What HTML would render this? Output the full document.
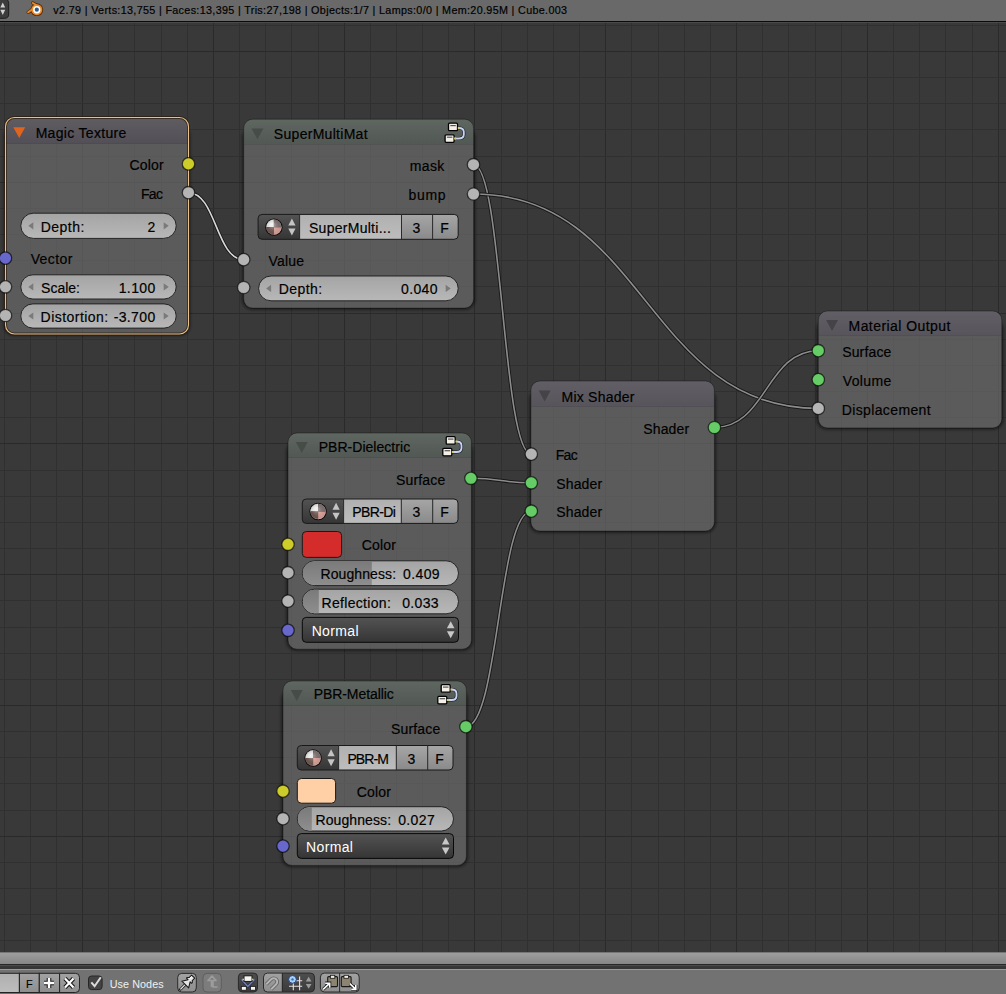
<!DOCTYPE html>
<html><head><meta charset="utf-8"><title>Node Editor</title><style>html,body{margin:0;padding:0;background:#393939;overflow:hidden}svg{display:block;position:absolute;left:0;top:0}text{font-family:"Liberation Sans",sans-serif;white-space:pre}</style></head><body><svg width="1006" height="994" viewBox="0 0 1006 994"><defs><filter id="shadow" x="-20%" y="-20%" width="140%" height="140%"><feGaussianBlur stdDeviation="2.5"/></filter><radialGradient id="gsph" cx="0.5" cy="0.5" r="0.5" fx="0.35" fy="0.3"><stop offset="0" stop-color="#fff" stop-opacity="0.55"/><stop offset="0.45" stop-color="#fff" stop-opacity="0.1"/><stop offset="0.85" stop-color="#000" stop-opacity="0.05"/><stop offset="1" stop-color="#fff" stop-opacity="0.35"/></radialGradient><linearGradient id="gnum" x1="0" y1="0" x2="0" y2="1"><stop offset="0" stop-color="#a4a4a4"/><stop offset="1" stop-color="#b8b8b8"/></linearGradient><linearGradient id="gfill" x1="0" y1="0" x2="0" y2="1"><stop offset="0" stop-color="#7a7a7a"/><stop offset="1" stop-color="#8e8e8e"/></linearGradient><linearGradient id="gmenu" x1="0" y1="0" x2="0" y2="1"><stop offset="0" stop-color="#535353"/><stop offset="1" stop-color="#353535"/></linearGradient><linearGradient id="gbtn" x1="0" y1="0" x2="0" y2="1"><stop offset="0" stop-color="#a6a6a6"/><stop offset="1" stop-color="#8a8a8a"/></linearGradient><linearGradient id="gtxt" x1="0" y1="0" x2="0" y2="1"><stop offset="0" stop-color="#b0b0b0"/><stop offset="1" stop-color="#bdbdbd"/></linearGradient><mask id="nm7" maskUnits="userSpaceOnUse" x="0" y="0" width="1006" height="994"><rect x="0" y="0" width="1006" height="994" fill="#fff"/><rect x="5.5" y="117.5" width="183.0" height="216.5" rx="9" fill="#000"/></mask><linearGradient id="hg8" x1="0" y1="0" x2="0" y2="1"><stop offset="0" stop-color="#5f5c62"/><stop offset="1" stop-color="#524f56"/></linearGradient><mask id="nm9" maskUnits="userSpaceOnUse" x="0" y="0" width="1006" height="994"><rect x="0" y="0" width="1006" height="994" fill="#fff"/><rect x="243.7" y="119.2" width="229.90000000000003" height="188.90000000000003" rx="9" fill="#000"/></mask><linearGradient id="hg10" x1="0" y1="0" x2="0" y2="1"><stop offset="0" stop-color="#5f6761"/><stop offset="1" stop-color="#525854"/></linearGradient><mask id="nm11" maskUnits="userSpaceOnUse" x="0" y="0" width="1006" height="994"><rect x="0" y="0" width="1006" height="994" fill="#fff"/><rect x="288.0" y="433.0" width="183.39999999999998" height="216.20000000000005" rx="9" fill="#000"/></mask><linearGradient id="hg12" x1="0" y1="0" x2="0" y2="1"><stop offset="0" stop-color="#5f6761"/><stop offset="1" stop-color="#525854"/></linearGradient><clipPath id="clip13"><rect x="302.3" y="560.8" width="69.5" height="24.800000000000068"/></clipPath><clipPath id="clip14"><rect x="302.3" y="589.2" width="16.5" height="24.59999999999991"/></clipPath><mask id="nm15" maskUnits="userSpaceOnUse" x="0" y="0" width="1006" height="994"><rect x="0" y="0" width="1006" height="994" fill="#fff"/><rect x="283.0" y="681.0" width="183.39999999999998" height="184.39999999999998" rx="9" fill="#000"/></mask><linearGradient id="hg16" x1="0" y1="0" x2="0" y2="1"><stop offset="0" stop-color="#5f6761"/><stop offset="1" stop-color="#525854"/></linearGradient><clipPath id="clip17"><rect x="297.3" y="806.7" width="14.5" height="24.299999999999955"/></clipPath><mask id="nm18" maskUnits="userSpaceOnUse" x="0" y="0" width="1006" height="994"><rect x="0" y="0" width="1006" height="994" fill="#fff"/><rect x="530.9" y="381.0" width="183.5" height="150.10000000000002" rx="9" fill="#000"/></mask><linearGradient id="hg19" x1="0" y1="0" x2="0" y2="1"><stop offset="0" stop-color="#615f65"/><stop offset="1" stop-color="#57555b"/></linearGradient><mask id="nm20" maskUnits="userSpaceOnUse" x="0" y="0" width="1006" height="994"><rect x="0" y="0" width="1006" height="994" fill="#fff"/><rect x="818.3" y="311.0" width="183.5" height="116.89999999999998" rx="9" fill="#000"/></mask><linearGradient id="hg21" x1="0" y1="0" x2="0" y2="1"><stop offset="0" stop-color="#615f65"/><stop offset="1" stop-color="#57555b"/></linearGradient><linearGradient id="gband" x1="0" y1="0" x2="0" y2="1"><stop offset="0" stop-color="#9e9e9e"/><stop offset="1" stop-color="#868686"/></linearGradient><linearGradient id="gfbtn" x1="0" y1="0" x2="0" y2="1"><stop offset="0" stop-color="#a2a2a2"/><stop offset="1" stop-color="#8e8e8e"/></linearGradient><linearGradient id="gfdark" x1="0" y1="0" x2="0" y2="1"><stop offset="0" stop-color="#4e4e4e"/><stop offset="1" stop-color="#3a3a3a"/></linearGradient></defs><rect x="0" y="0" width="1006" height="994" fill="#393939"/>
<g shape-rendering="crispEdges"><rect x="4" y="22" width="1" height="930" fill="#303030"/><rect x="30" y="22" width="1" height="930" fill="#303030"/><rect x="56" y="22" width="1" height="930" fill="#303030"/><rect x="82" y="22" width="1" height="930" fill="#2a2a2a"/><rect x="108" y="22" width="1" height="930" fill="#303030"/><rect x="134" y="22" width="1" height="930" fill="#303030"/><rect x="161" y="22" width="1" height="930" fill="#303030"/><rect x="187" y="22" width="1" height="930" fill="#303030"/><rect x="213" y="22" width="1" height="930" fill="#2a2a2a"/><rect x="239" y="22" width="1" height="930" fill="#303030"/><rect x="265" y="22" width="1" height="930" fill="#303030"/><rect x="291" y="22" width="1" height="930" fill="#303030"/><rect x="318" y="22" width="1" height="930" fill="#303030"/><rect x="344" y="22" width="1" height="930" fill="#2a2a2a"/><rect x="370" y="22" width="1" height="930" fill="#303030"/><rect x="396" y="22" width="1" height="930" fill="#303030"/><rect x="422" y="22" width="1" height="930" fill="#303030"/><rect x="448" y="22" width="1" height="930" fill="#303030"/><rect x="474" y="22" width="1" height="930" fill="#2a2a2a"/><rect x="501" y="22" width="1" height="930" fill="#303030"/><rect x="527" y="22" width="1" height="930" fill="#303030"/><rect x="553" y="22" width="1" height="930" fill="#303030"/><rect x="579" y="22" width="1" height="930" fill="#303030"/><rect x="605" y="22" width="1" height="930" fill="#2a2a2a"/><rect x="631" y="22" width="1" height="930" fill="#303030"/><rect x="658" y="22" width="1" height="930" fill="#303030"/><rect x="684" y="22" width="1" height="930" fill="#303030"/><rect x="710" y="22" width="1" height="930" fill="#303030"/><rect x="736" y="22" width="1" height="930" fill="#2a2a2a"/><rect x="762" y="22" width="1" height="930" fill="#303030"/><rect x="788" y="22" width="1" height="930" fill="#303030"/><rect x="815" y="22" width="1" height="930" fill="#303030"/><rect x="841" y="22" width="1" height="930" fill="#303030"/><rect x="867" y="22" width="1" height="930" fill="#2a2a2a"/><rect x="893" y="22" width="1" height="930" fill="#303030"/><rect x="919" y="22" width="1" height="930" fill="#303030"/><rect x="945" y="22" width="1" height="930" fill="#303030"/><rect x="972" y="22" width="1" height="930" fill="#303030"/><rect x="998" y="22" width="1" height="930" fill="#2a2a2a"/><rect x="0" y="25" width="1006" height="1" fill="#303030"/><rect x="0" y="51" width="1006" height="1" fill="#2a2a2a"/><rect x="0" y="77" width="1006" height="1" fill="#303030"/><rect x="0" y="103" width="1006" height="1" fill="#303030"/><rect x="0" y="129" width="1006" height="1" fill="#303030"/><rect x="0" y="156" width="1006" height="1" fill="#303030"/><rect x="0" y="182" width="1006" height="1" fill="#2a2a2a"/><rect x="0" y="208" width="1006" height="1" fill="#303030"/><rect x="0" y="234" width="1006" height="1" fill="#303030"/><rect x="0" y="260" width="1006" height="1" fill="#303030"/><rect x="0" y="286" width="1006" height="1" fill="#303030"/><rect x="0" y="313" width="1006" height="1" fill="#2a2a2a"/><rect x="0" y="339" width="1006" height="1" fill="#303030"/><rect x="0" y="365" width="1006" height="1" fill="#303030"/><rect x="0" y="391" width="1006" height="1" fill="#303030"/><rect x="0" y="417" width="1006" height="1" fill="#303030"/><rect x="0" y="443" width="1006" height="1" fill="#2a2a2a"/><rect x="0" y="470" width="1006" height="1" fill="#303030"/><rect x="0" y="496" width="1006" height="1" fill="#303030"/><rect x="0" y="522" width="1006" height="1" fill="#303030"/><rect x="0" y="548" width="1006" height="1" fill="#303030"/><rect x="0" y="574" width="1006" height="1" fill="#2a2a2a"/><rect x="0" y="600" width="1006" height="1" fill="#303030"/><rect x="0" y="627" width="1006" height="1" fill="#303030"/><rect x="0" y="653" width="1006" height="1" fill="#303030"/><rect x="0" y="679" width="1006" height="1" fill="#303030"/><rect x="0" y="705" width="1006" height="1" fill="#2a2a2a"/><rect x="0" y="731" width="1006" height="1" fill="#303030"/><rect x="0" y="757" width="1006" height="1" fill="#303030"/><rect x="0" y="783" width="1006" height="1" fill="#303030"/><rect x="0" y="810" width="1006" height="1" fill="#303030"/><rect x="0" y="836" width="1006" height="1" fill="#2a2a2a"/><rect x="0" y="862" width="1006" height="1" fill="#303030"/><rect x="0" y="888" width="1006" height="1" fill="#303030"/><rect x="0" y="914" width="1006" height="1" fill="#303030"/><rect x="0" y="940" width="1006" height="1" fill="#303030"/></g>
<path d="M188.5,192.7 C216.1,192.7 216.1,259.6 243.7,259.6" fill="none" stroke="#141414" stroke-opacity="0.9" stroke-width="3.4"/>
<path d="M188.5,192.7 C216.1,192.7 216.1,259.6 243.7,259.6" fill="none" stroke="#d8d8d8" stroke-width="1.6"/>
<path d="M473.5,164.7 C502.4,164.7 502.4,454.1 531.3,454.1" fill="none" stroke="#141414" stroke-opacity="0.9" stroke-width="3.4"/>
<path d="M473.5,164.7 C502.4,164.7 502.4,454.1 531.3,454.1" fill="none" stroke="#8c8c8c" stroke-width="1.6"/>
<path d="M473.5,194.0 C645.9,194.0 645.9,408.4 818.3,408.4" fill="none" stroke="#141414" stroke-opacity="0.9" stroke-width="3.4"/>
<path d="M473.5,194.0 C645.9,194.0 645.9,408.4 818.3,408.4" fill="none" stroke="#8c8c8c" stroke-width="1.6"/>
<path d="M470.9,478.3 C501.09999999999997,478.3 501.09999999999997,482.8 531.3,482.8" fill="none" stroke="#141414" stroke-opacity="0.9" stroke-width="3.4"/>
<path d="M470.9,478.3 C501.09999999999997,478.3 501.09999999999997,482.8 531.3,482.8" fill="none" stroke="#8c8c8c" stroke-width="1.6"/>
<path d="M465.9,726.7 C498.59999999999997,726.7 498.59999999999997,511.2 531.3,511.2" fill="none" stroke="#141414" stroke-opacity="0.9" stroke-width="3.4"/>
<path d="M465.9,726.7 C498.59999999999997,726.7 498.59999999999997,511.2 531.3,511.2" fill="none" stroke="#8c8c8c" stroke-width="1.6"/>
<path d="M714.4,427.5 C766.3499999999999,427.5 766.3499999999999,350.7 818.3,350.7" fill="none" stroke="#141414" stroke-opacity="0.9" stroke-width="3.4"/>
<path d="M714.4,427.5 C766.3499999999999,427.5 766.3499999999999,350.7 818.3,350.7" fill="none" stroke="#8c8c8c" stroke-width="1.6"/>
<g mask="url(#nm7)">
<rect x="0.70" y="122.70" width="192.60" height="216.10" rx="13.80" fill="#000" fill-opacity="0.0078"/>
<rect x="1.10" y="123.10" width="191.80" height="215.30" rx="13.40" fill="#000" fill-opacity="0.0157"/>
<rect x="1.50" y="123.50" width="191.00" height="214.50" rx="13.00" fill="#000" fill-opacity="0.0235"/>
<rect x="1.90" y="123.90" width="190.20" height="213.70" rx="12.60" fill="#000" fill-opacity="0.0314"/>
<rect x="2.30" y="124.30" width="189.40" height="212.90" rx="12.20" fill="#000" fill-opacity="0.0392"/>
<rect x="2.70" y="124.70" width="188.60" height="212.10" rx="11.80" fill="#000" fill-opacity="0.0471"/>
<rect x="3.10" y="125.10" width="187.80" height="211.30" rx="11.40" fill="#000" fill-opacity="0.0549"/>
<rect x="3.50" y="125.50" width="187.00" height="210.50" rx="11.00" fill="#000" fill-opacity="0.0627"/>
<rect x="3.90" y="125.90" width="186.20" height="209.70" rx="10.60" fill="#000" fill-opacity="0.0706"/>
<rect x="4.30" y="126.30" width="185.40" height="208.90" rx="10.20" fill="#000" fill-opacity="0.0784"/>
<rect x="4.70" y="126.70" width="184.60" height="208.10" rx="9.80" fill="#000" fill-opacity="0.0863"/>
<rect x="5.10" y="127.10" width="183.80" height="207.30" rx="9.40" fill="#000" fill-opacity="0.0941"/>
</g>
<path d="M5.5,143.5 L188.5,143.5 L188.5,325.0 A9,9 0 0 1 179.5,334.0 L14.5,334.0 A9,9 0 0 1 5.5,325.0 L5.5,143.5 Z" fill="rgb(106,106,106)" fill-opacity="0.7"/>
<path d="M14.5,117.5 L179.5,117.5 A9,9 0 0 1 188.5,126.5 L188.5,143.5 L5.5,143.5 L5.5,126.5 A9,9 0 0 1 14.5,117.5 Z" fill="url(#hg8)"/>
<rect x="5.5" y="117.5" width="183.0" height="216.5" rx="9" fill="none" stroke="#2a1a08" stroke-width="3" opacity="0.7"/>
<rect x="5.5" y="117.5" width="183.0" height="216.5" rx="9" fill="none" stroke="#e8c08c" stroke-width="1.1"/>
<path d="M13.3,127.2 L25.2,127.2 L19.25,138.1 Z" fill="#e0641e"/>
<text x="35.65" y="137.80" font-size="14.00" letter-spacing="0.312" fill="#000" stroke="#000" stroke-width="0.18" >Magic Texture</text>
<text x="129.48" y="169.80" font-size="14.00" letter-spacing="0.175" fill="#000" stroke="#000" stroke-width="0.18" >Color</text>
<circle cx="188.5" cy="163.9" r="6.2" fill="#cccc2a" stroke="#000" stroke-opacity="0.65" stroke-width="1.3"/>
<text x="140.94" y="198.60" font-size="14.00" letter-spacing="-0.656" fill="#000" stroke="#000" stroke-width="0.18" >Fac</text>
<circle cx="188.5" cy="192.7" r="6.2" fill="#b4b4b4" stroke="#000" stroke-opacity="0.65" stroke-width="1.3"/>
<rect x="20.8" y="213.2" width="155.39999999999998" height="25.200000000000017" rx="12.600000000000009" fill="url(#gnum)" stroke="#191919" stroke-opacity="0.9" stroke-width="1"/>
<path d="M33.3,222.20000000000002 L33.3,229.4 L28.3,225.8 Z" fill="#7a7a7a"/>
<path d="M163.7,222.20000000000002 L163.7,229.4 L168.7,225.8 Z" fill="#7a7a7a"/>
<text x="40.75" y="231.80" font-size="14.00" letter-spacing="0.472" fill="#000" stroke="#000" stroke-width="0.18" >Depth:</text>
<text x="147.62" y="231.80" font-size="14.00" letter-spacing="0.000" fill="#000" stroke="#000" stroke-width="0.18" >2</text>
<text x="30.64" y="263.60" font-size="14.00" letter-spacing="0.433" fill="#000" stroke="#000" stroke-width="0.18" >Vector</text>
<circle cx="5.5" cy="258.1" r="6.2" fill="#6868cc" stroke="#000" stroke-opacity="0.65" stroke-width="1.3"/>
<rect x="20.8" y="274.8" width="155.39999999999998" height="24.19999999999999" rx="12.099999999999994" fill="url(#gnum)" stroke="#191919" stroke-opacity="0.9" stroke-width="1"/>
<path d="M33.3,283.29999999999995 L33.3,290.5 L28.3,286.9 Z" fill="#7a7a7a"/>
<path d="M163.7,283.29999999999995 L163.7,290.5 L168.7,286.9 Z" fill="#7a7a7a"/>
<text x="41.06" y="292.90" font-size="14.00" letter-spacing="-0.003" fill="#000" stroke="#000" stroke-width="0.18" >Scale:</text>
<text x="118.71" y="292.90" font-size="14.00" letter-spacing="0.376" fill="#000" stroke="#000" stroke-width="0.18" >1.100</text>
<circle cx="5.5" cy="286.8" r="6.2" fill="#b4b4b4" stroke="#000" stroke-opacity="0.65" stroke-width="1.3"/>
<rect x="20.8" y="303.9" width="155.39999999999998" height="24.200000000000045" rx="12.100000000000023" fill="url(#gnum)" stroke="#191919" stroke-opacity="0.9" stroke-width="1"/>
<path d="M33.3,312.4 L33.3,319.6 L28.3,316.0 Z" fill="#7a7a7a"/>
<path d="M163.7,312.4 L163.7,319.6 L168.7,316.0 Z" fill="#7a7a7a"/>
<text x="40.55" y="322.00" font-size="14.00" letter-spacing="0.469" fill="#000" stroke="#000" stroke-width="0.18" >Distortion:</text>
<text x="113.67" y="322.00" font-size="14.00" letter-spacing="0.376" fill="#000" stroke="#000" stroke-width="0.18" >-3.700</text>
<circle cx="5.5" cy="315.5" r="6.2" fill="#b4b4b4" stroke="#000" stroke-opacity="0.65" stroke-width="1.3"/>
<g mask="url(#nm9)">
<rect x="238.90" y="124.40" width="239.50" height="188.50" rx="13.80" fill="#000" fill-opacity="0.0078"/>
<rect x="239.30" y="124.80" width="238.70" height="187.70" rx="13.40" fill="#000" fill-opacity="0.0157"/>
<rect x="239.70" y="125.20" width="237.90" height="186.90" rx="13.00" fill="#000" fill-opacity="0.0235"/>
<rect x="240.10" y="125.60" width="237.10" height="186.10" rx="12.60" fill="#000" fill-opacity="0.0314"/>
<rect x="240.50" y="126.00" width="236.30" height="185.30" rx="12.20" fill="#000" fill-opacity="0.0392"/>
<rect x="240.90" y="126.40" width="235.50" height="184.50" rx="11.80" fill="#000" fill-opacity="0.0471"/>
<rect x="241.30" y="126.80" width="234.70" height="183.70" rx="11.40" fill="#000" fill-opacity="0.0549"/>
<rect x="241.70" y="127.20" width="233.90" height="182.90" rx="11.00" fill="#000" fill-opacity="0.0627"/>
<rect x="242.10" y="127.60" width="233.10" height="182.10" rx="10.60" fill="#000" fill-opacity="0.0706"/>
<rect x="242.50" y="128.00" width="232.30" height="181.30" rx="10.20" fill="#000" fill-opacity="0.0784"/>
<rect x="242.90" y="128.40" width="231.50" height="180.50" rx="9.80" fill="#000" fill-opacity="0.0863"/>
<rect x="243.30" y="128.80" width="230.70" height="179.70" rx="9.40" fill="#000" fill-opacity="0.0941"/>
</g>
<path d="M243.7,144.3 L473.6,144.3 L473.6,299.1 A9,9 0 0 1 464.6,308.1 L252.7,308.1 A9,9 0 0 1 243.7,299.1 L243.7,144.3 Z" fill="rgb(106,106,106)" fill-opacity="0.7"/>
<path d="M252.7,119.2 L464.6,119.2 A9,9 0 0 1 473.6,128.2 L473.6,144.3 L243.7,144.3 L243.7,128.2 A9,9 0 0 1 252.7,119.2 Z" fill="url(#hg10)"/>
<rect x="243.7" y="119.2" width="229.90000000000003" height="188.90000000000003" rx="9" fill="none" stroke="#000" stroke-opacity="0.35" stroke-width="1"/>
<path d="M251.5,128.45 L263.4,128.45 L257.45,139.35 Z" fill="#464d48"/>
<text x="273.86" y="138.90" font-size="14.00" letter-spacing="0.288" fill="#000" stroke="#000" stroke-width="0.18" >SuperMultiMat</text>
<path d="M458.8,128.0 Q463.8,128.0 463.8,132.0 L463.8,134.5 Q463.8,138.5 458.8,138.5 L453.3,138.5" fill="none" stroke="#1a1a2a" stroke-width="3.2"/>
<path d="M458.8,128.0 Q463.8,128.0 463.8,132.0 L463.8,134.5 Q463.8,138.5 458.8,138.5 L453.3,138.5" fill="none" stroke="#c8d4ee" stroke-width="1.9"/>
<rect x="448.5" y="123.2" width="9" height="7.5" rx="1" fill="#f4f0e8" stroke="#000" stroke-width="1.3"/>
<rect x="450.3" y="125.0" width="5.5" height="1.2" fill="#555"/>
<rect x="445.1" y="134.8" width="9" height="7.5" rx="1" fill="#f4f0e8" stroke="#000" stroke-width="1.3"/>
<rect x="446.90000000000003" y="136.6" width="5.5" height="1.2" fill="#555"/>
<rect x="457.8" y="127.0" width="2" height="2" fill="#d8c870"/>
<rect x="454.1" y="137.5" width="2" height="2" fill="#d8c870"/>
<text x="409.66" y="171.00" font-size="14.00" letter-spacing="0.391" fill="#000" stroke="#000" stroke-width="0.18" >mask</text>
<circle cx="473.5" cy="164.7" r="6.2" fill="#b4b4b4" stroke="#000" stroke-opacity="0.65" stroke-width="1.3"/>
<text x="408.58" y="200.20" font-size="14.00" letter-spacing="0.662" fill="#000" stroke="#000" stroke-width="0.18" >bump</text>
<circle cx="473.5" cy="194.0" r="6.2" fill="#b4b4b4" stroke="#000" stroke-opacity="0.65" stroke-width="1.3"/>
<path d="M262.1,214.4 L299.6,214.4 L299.6,239.3 L262.1,239.3 A4,4 0 0 1 258.1,235.3 L258.1,218.4 A4,4 0 0 1 262.1,214.4 Z" fill="url(#gmenu)"/>
<rect x="299.6" y="214.4" width="101.89999999999998" height="24.900000000000006" fill="url(#gtxt)"/>
<rect x="401.5" y="214.4" width="31.100000000000023" height="24.900000000000006" fill="url(#gbtn)"/>
<path d="M432.6,214.4 L454.2,214.4 A4,4 0 0 1 458.2,218.4 L458.2,235.3 A4,4 0 0 1 454.2,239.3 L432.6,239.3 L432.6,214.4 Z" fill="url(#gbtn)"/>
<path d="M262.1,214.4 L454.2,214.4 A4,4 0 0 1 458.2,218.4 L458.2,235.3 A4,4 0 0 1 454.2,239.3 L262.1,239.3 A4,4 0 0 1 258.1,235.3 L258.1,218.4 A4,4 0 0 1 262.1,214.4 Z" fill="none" stroke="#191919" stroke-width="1"/>
<rect x="299.1" y="214.4" width="1" height="24.900000000000006" fill="#2a2a2a"/>
<rect x="401.0" y="214.4" width="1" height="24.900000000000006" fill="#2a2a2a"/>
<rect x="432.1" y="214.4" width="1" height="24.900000000000006" fill="#2a2a2a"/>
<circle cx="273.90000000000003" cy="227.15000000000003" r="8.7" fill="#140c0c"/>
<path d="M273.90000000000003,227.15000000000003 L273.90000000000003,219.45000000000005 A7.7,7.7 0 0 0 266.20000000000005,227.15000000000003 Z" fill="#e4e4e4"/>
<path d="M273.90000000000003,227.15000000000003 L281.6,227.15000000000003 A7.7,7.7 0 0 0 273.90000000000003,219.45000000000005 Z" fill="#7e7070"/>
<path d="M273.90000000000003,227.15000000000003 L266.20000000000005,227.15000000000003 A7.7,7.7 0 0 0 273.90000000000003,234.85000000000002 Z" fill="#6e5650"/>
<path d="M273.90000000000003,227.15000000000003 L273.90000000000003,234.85000000000002 A7.7,7.7 0 0 0 281.6,227.15000000000003 Z" fill="#d8a098"/>
<circle cx="273.90000000000003" cy="227.15000000000003" r="7.7" fill="url(#gsph)"/>
<path d="M288.3,225.45000000000002 L295.50000000000006,225.45000000000002 L291.90000000000003,218.45000000000002 Z" fill="#c4c4c4"/>
<path d="M288.3,228.45000000000002 L295.50000000000006,228.45000000000002 L291.90000000000003,235.45000000000002 Z" fill="#c4c4c4"/>
<text x="308.96" y="232.85" font-size="14.00" letter-spacing="0.277" fill="#000" stroke="#000" stroke-width="0.18" >SuperMulti...</text>
<text x="412.52" y="232.85" font-size="14.00" letter-spacing="0.000" fill="#000" stroke="#000" stroke-width="0.18" >3</text>
<text x="440.25" y="232.85" font-size="14.00" letter-spacing="0.000" fill="#000" stroke="#000" stroke-width="0.18" >F</text>
<text x="268.54" y="265.60" font-size="14.00" letter-spacing="0.198" fill="#000" stroke="#000" stroke-width="0.18" >Value</text>
<circle cx="243.7" cy="259.6" r="6.2" fill="#b4b4b4" stroke="#000" stroke-opacity="0.65" stroke-width="1.3"/>
<rect x="258.6" y="276.0" width="199.59999999999997" height="24.80000000000001" rx="12.400000000000006" fill="url(#gnum)" stroke="#191919" stroke-opacity="0.9" stroke-width="1"/>
<path d="M271.1,284.79999999999995 L271.1,292.0 L266.1,288.4 Z" fill="#7a7a7a"/>
<path d="M445.7,284.79999999999995 L445.7,292.0 L450.7,288.4 Z" fill="#7a7a7a"/>
<text x="278.65" y="294.40" font-size="14.00" letter-spacing="0.472" fill="#000" stroke="#000" stroke-width="0.18" >Depth:</text>
<text x="400.96" y="294.40" font-size="14.00" letter-spacing="0.389" fill="#000" stroke="#000" stroke-width="0.18" >0.040</text>
<circle cx="243.7" cy="287.5" r="6.2" fill="#b4b4b4" stroke="#000" stroke-opacity="0.65" stroke-width="1.3"/>
<g mask="url(#nm11)">
<rect x="283.20" y="438.20" width="193.00" height="215.80" rx="13.80" fill="#000" fill-opacity="0.0078"/>
<rect x="283.60" y="438.60" width="192.20" height="215.00" rx="13.40" fill="#000" fill-opacity="0.0157"/>
<rect x="284.00" y="439.00" width="191.40" height="214.20" rx="13.00" fill="#000" fill-opacity="0.0235"/>
<rect x="284.40" y="439.40" width="190.60" height="213.40" rx="12.60" fill="#000" fill-opacity="0.0314"/>
<rect x="284.80" y="439.80" width="189.80" height="212.60" rx="12.20" fill="#000" fill-opacity="0.0392"/>
<rect x="285.20" y="440.20" width="189.00" height="211.80" rx="11.80" fill="#000" fill-opacity="0.0471"/>
<rect x="285.60" y="440.60" width="188.20" height="211.00" rx="11.40" fill="#000" fill-opacity="0.0549"/>
<rect x="286.00" y="441.00" width="187.40" height="210.20" rx="11.00" fill="#000" fill-opacity="0.0627"/>
<rect x="286.40" y="441.40" width="186.60" height="209.40" rx="10.60" fill="#000" fill-opacity="0.0706"/>
<rect x="286.80" y="441.80" width="185.80" height="208.60" rx="10.20" fill="#000" fill-opacity="0.0784"/>
<rect x="287.20" y="442.20" width="185.00" height="207.80" rx="9.80" fill="#000" fill-opacity="0.0863"/>
<rect x="287.60" y="442.60" width="184.20" height="207.00" rx="9.40" fill="#000" fill-opacity="0.0941"/>
</g>
<path d="M288.0,457.8 L471.4,457.8 L471.4,640.2 A9,9 0 0 1 462.4,649.2 L297.0,649.2 A9,9 0 0 1 288.0,640.2 L288.0,457.8 Z" fill="rgb(106,106,106)" fill-opacity="0.7"/>
<path d="M297.0,433.0 L462.4,433.0 A9,9 0 0 1 471.4,442.0 L471.4,457.8 L288.0,457.8 L288.0,442.0 A9,9 0 0 1 297.0,433.0 Z" fill="url(#hg12)"/>
<rect x="288.0" y="433.0" width="183.39999999999998" height="216.20000000000005" rx="9" fill="none" stroke="#000" stroke-opacity="0.35" stroke-width="1"/>
<path d="M295.8,442.09999999999997 L307.7,442.09999999999997 L301.75,453.0 Z" fill="#464d48"/>
<text x="318.65" y="452.40" font-size="14.00" letter-spacing="0.037" fill="#000" stroke="#000" stroke-width="0.18" >PBR-Dielectric</text>
<path d="M456.5,441.5 Q461.5,441.5 461.5,445.5 L461.5,448.0 Q461.5,452.0 456.5,452.0 L451.0,452.0" fill="none" stroke="#1a1a2a" stroke-width="3.2"/>
<path d="M456.5,441.5 Q461.5,441.5 461.5,445.5 L461.5,448.0 Q461.5,452.0 456.5,452.0 L451.0,452.0" fill="none" stroke="#c8d4ee" stroke-width="1.9"/>
<rect x="446.2" y="436.7" width="9" height="7.5" rx="1" fill="#f4f0e8" stroke="#000" stroke-width="1.3"/>
<rect x="448.0" y="438.5" width="5.5" height="1.2" fill="#555"/>
<rect x="442.8" y="448.3" width="9" height="7.5" rx="1" fill="#f4f0e8" stroke="#000" stroke-width="1.3"/>
<rect x="444.6" y="450.1" width="5.5" height="1.2" fill="#555"/>
<rect x="455.5" y="440.5" width="2" height="2" fill="#d8c870"/>
<rect x="451.8" y="451.0" width="2" height="2" fill="#d8c870"/>
<text x="395.99" y="485.40" font-size="14.00" letter-spacing="0.164" fill="#000" stroke="#000" stroke-width="0.18" >Surface</text>
<circle cx="470.9" cy="478.3" r="6.2" fill="#66cc66" stroke="#000" stroke-opacity="0.65" stroke-width="1.3"/>
<path d="M306.3,499.0 L343.6,499.0 L343.6,523.4 L306.3,523.4 A4,4 0 0 1 302.3,519.4 L302.3,503.0 A4,4 0 0 1 306.3,499.0 Z" fill="url(#gmenu)"/>
<rect x="343.6" y="499.0" width="57.69999999999999" height="24.399999999999977" fill="url(#gtxt)"/>
<rect x="401.3" y="499.0" width="31.399999999999977" height="24.399999999999977" fill="url(#gbtn)"/>
<path d="M432.7,499.0 L454.0,499.0 A4,4 0 0 1 458.0,503.0 L458.0,519.4 A4,4 0 0 1 454.0,523.4 L432.7,523.4 L432.7,499.0 Z" fill="url(#gbtn)"/>
<path d="M306.3,499.0 L454.0,499.0 A4,4 0 0 1 458.0,503.0 L458.0,519.4 A4,4 0 0 1 454.0,523.4 L306.3,523.4 A4,4 0 0 1 302.3,519.4 L302.3,503.0 A4,4 0 0 1 306.3,499.0 Z" fill="none" stroke="#191919" stroke-width="1"/>
<rect x="343.1" y="499.0" width="1" height="24.399999999999977" fill="#2a2a2a"/>
<rect x="400.8" y="499.0" width="1" height="24.399999999999977" fill="#2a2a2a"/>
<rect x="432.2" y="499.0" width="1" height="24.399999999999977" fill="#2a2a2a"/>
<circle cx="318.1" cy="511.5" r="8.7" fill="#140c0c"/>
<path d="M318.1,511.5 L318.1,503.8 A7.7,7.7 0 0 0 310.40000000000003,511.5 Z" fill="#e4e4e4"/>
<path d="M318.1,511.5 L325.8,511.5 A7.7,7.7 0 0 0 318.1,503.8 Z" fill="#7e7070"/>
<path d="M318.1,511.5 L310.40000000000003,511.5 A7.7,7.7 0 0 0 318.1,519.2 Z" fill="#6e5650"/>
<path d="M318.1,511.5 L318.1,519.2 A7.7,7.7 0 0 0 325.8,511.5 Z" fill="#d8a098"/>
<circle cx="318.1" cy="511.5" r="7.7" fill="url(#gsph)"/>
<path d="M332.5,509.8 L339.70000000000005,509.8 L336.1,502.8 Z" fill="#c4c4c4"/>
<path d="M332.5,512.8 L339.70000000000005,512.8 L336.1,519.8 Z" fill="#c4c4c4"/>
<text x="352.15" y="517.20" font-size="14.00" letter-spacing="-0.594" fill="#000" stroke="#000" stroke-width="0.18" >PBR-Di</text>
<text x="412.47" y="517.20" font-size="14.00" letter-spacing="0.000" fill="#000" stroke="#000" stroke-width="0.18" >3</text>
<text x="440.20" y="517.20" font-size="14.00" letter-spacing="0.000" fill="#000" stroke="#000" stroke-width="0.18" >F</text>
<rect x="302.3" y="531.5" width="39.30000000000001" height="25.899999999999977" rx="4" fill="#d42b2b" stroke="#191919" stroke-width="1"/>
<text x="361.79" y="550.30" font-size="14.00" letter-spacing="0.175" fill="#000" stroke="#000" stroke-width="0.18" >Color</text>
<circle cx="288.0" cy="544.3" r="6.2" fill="#cccc2a" stroke="#000" stroke-opacity="0.65" stroke-width="1.3"/>
<rect x="302.3" y="560.8" width="156.2" height="24.800000000000068" rx="12.400000000000034" fill="url(#gnum)" stroke="#191919" stroke-opacity="0.9" stroke-width="1"/>
<rect x="302.8" y="561.3" width="155.2" height="23.800000000000068" rx="11.900000000000034" fill="url(#gfill)" clip-path="url(#clip13)"/>
<text x="320.55" y="579.20" font-size="14.00" letter-spacing="0.089" fill="#000" stroke="#000" stroke-width="0.18" >Roughness:</text>
<text x="403.01" y="579.20" font-size="14.00" letter-spacing="0.405" fill="#000" stroke="#000" stroke-width="0.18" >0.409</text>
<circle cx="288.0" cy="572.7" r="6.2" fill="#b4b4b4" stroke="#000" stroke-opacity="0.65" stroke-width="1.3"/>
<rect x="302.3" y="589.2" width="156.2" height="24.59999999999991" rx="12.299999999999955" fill="url(#gnum)" stroke="#191919" stroke-opacity="0.9" stroke-width="1"/>
<rect x="302.8" y="589.7" width="155.2" height="23.59999999999991" rx="11.799999999999955" fill="url(#gfill)" clip-path="url(#clip14)"/>
<text x="321.55" y="607.50" font-size="14.00" letter-spacing="0.314" fill="#000" stroke="#000" stroke-width="0.18" >Reflection:</text>
<text x="402.13" y="607.50" font-size="14.00" letter-spacing="0.362" fill="#000" stroke="#000" stroke-width="0.18" >0.033</text>
<circle cx="288.0" cy="601.1" r="6.2" fill="#b4b4b4" stroke="#000" stroke-opacity="0.65" stroke-width="1.3"/>
<rect x="302.3" y="617.4" width="156.2" height="24.899999999999977" rx="4" fill="url(#gmenu)" stroke="#000" stroke-opacity="0.9" stroke-width="1"/>
<text x="311.65" y="635.85" font-size="14.00" letter-spacing="0.348" fill="#fff"  >Normal</text>
<path d="M446.9,628.3499999999999 L454.5,628.3499999999999 L450.7,621.3499999999999 Z" fill="#c8c8c8"/>
<path d="M446.9,631.3499999999999 L454.5,631.3499999999999 L450.7,638.3499999999999 Z" fill="#c8c8c8"/>
<circle cx="288.0" cy="630.3" r="6.2" fill="#6868cc" stroke="#000" stroke-opacity="0.65" stroke-width="1.3"/>
<g mask="url(#nm15)">
<rect x="278.20" y="686.20" width="193.00" height="184.00" rx="13.80" fill="#000" fill-opacity="0.0078"/>
<rect x="278.60" y="686.60" width="192.20" height="183.20" rx="13.40" fill="#000" fill-opacity="0.0157"/>
<rect x="279.00" y="687.00" width="191.40" height="182.40" rx="13.00" fill="#000" fill-opacity="0.0235"/>
<rect x="279.40" y="687.40" width="190.60" height="181.60" rx="12.60" fill="#000" fill-opacity="0.0314"/>
<rect x="279.80" y="687.80" width="189.80" height="180.80" rx="12.20" fill="#000" fill-opacity="0.0392"/>
<rect x="280.20" y="688.20" width="189.00" height="180.00" rx="11.80" fill="#000" fill-opacity="0.0471"/>
<rect x="280.60" y="688.60" width="188.20" height="179.20" rx="11.40" fill="#000" fill-opacity="0.0549"/>
<rect x="281.00" y="689.00" width="187.40" height="178.40" rx="11.00" fill="#000" fill-opacity="0.0627"/>
<rect x="281.40" y="689.40" width="186.60" height="177.60" rx="10.60" fill="#000" fill-opacity="0.0706"/>
<rect x="281.80" y="689.80" width="185.80" height="176.80" rx="10.20" fill="#000" fill-opacity="0.0784"/>
<rect x="282.20" y="690.20" width="185.00" height="176.00" rx="9.80" fill="#000" fill-opacity="0.0863"/>
<rect x="282.60" y="690.60" width="184.20" height="175.20" rx="9.40" fill="#000" fill-opacity="0.0941"/>
</g>
<path d="M283.0,705.8 L466.4,705.8 L466.4,856.4 A9,9 0 0 1 457.4,865.4 L292.0,865.4 A9,9 0 0 1 283.0,856.4 L283.0,705.8 Z" fill="rgb(106,106,106)" fill-opacity="0.7"/>
<path d="M292.0,681.0 L457.4,681.0 A9,9 0 0 1 466.4,690.0 L466.4,705.8 L283.0,705.8 L283.0,690.0 A9,9 0 0 1 292.0,681.0 Z" fill="url(#hg16)"/>
<rect x="283.0" y="681.0" width="183.39999999999998" height="184.39999999999998" rx="9" fill="none" stroke="#000" stroke-opacity="0.35" stroke-width="1"/>
<path d="M290.8,690.1 L302.7,690.1 L296.75,701.0 Z" fill="#464d48"/>
<text x="313.65" y="698.80" font-size="14.00" letter-spacing="-0.066" fill="#000" stroke="#000" stroke-width="0.18" >PBR-Metallic</text>
<path d="M451.5,689.5 Q456.5,689.5 456.5,693.5 L456.5,696.0 Q456.5,700.0 451.5,700.0 L446.0,700.0" fill="none" stroke="#1a1a2a" stroke-width="3.2"/>
<path d="M451.5,689.5 Q456.5,689.5 456.5,693.5 L456.5,696.0 Q456.5,700.0 451.5,700.0 L446.0,700.0" fill="none" stroke="#c8d4ee" stroke-width="1.9"/>
<rect x="441.2" y="684.7" width="9" height="7.5" rx="1" fill="#f4f0e8" stroke="#000" stroke-width="1.3"/>
<rect x="443.0" y="686.5" width="5.5" height="1.2" fill="#555"/>
<rect x="437.8" y="696.3" width="9" height="7.5" rx="1" fill="#f4f0e8" stroke="#000" stroke-width="1.3"/>
<rect x="439.6" y="698.1" width="5.5" height="1.2" fill="#555"/>
<rect x="450.5" y="688.5" width="2" height="2" fill="#d8c870"/>
<rect x="446.8" y="699.0" width="2" height="2" fill="#d8c870"/>
<text x="390.99" y="733.60" font-size="14.00" letter-spacing="0.164" fill="#000" stroke="#000" stroke-width="0.18" >Surface</text>
<circle cx="465.9" cy="726.7" r="6.2" fill="#66cc66" stroke="#000" stroke-opacity="0.65" stroke-width="1.3"/>
<path d="M301.3,745.5 L338.6,745.5 L338.6,770.0 L301.3,770.0 A4,4 0 0 1 297.3,766.0 L297.3,749.5 A4,4 0 0 1 301.3,745.5 Z" fill="url(#gmenu)"/>
<rect x="338.6" y="745.5" width="57.69999999999999" height="24.5" fill="url(#gtxt)"/>
<rect x="396.3" y="745.5" width="31.399999999999977" height="24.5" fill="url(#gbtn)"/>
<path d="M427.7,745.5 L449.0,745.5 A4,4 0 0 1 453.0,749.5 L453.0,766.0 A4,4 0 0 1 449.0,770.0 L427.7,770.0 L427.7,745.5 Z" fill="url(#gbtn)"/>
<path d="M301.3,745.5 L449.0,745.5 A4,4 0 0 1 453.0,749.5 L453.0,766.0 A4,4 0 0 1 449.0,770.0 L301.3,770.0 A4,4 0 0 1 297.3,766.0 L297.3,749.5 A4,4 0 0 1 301.3,745.5 Z" fill="none" stroke="#191919" stroke-width="1"/>
<rect x="338.1" y="745.5" width="1" height="24.5" fill="#2a2a2a"/>
<rect x="395.8" y="745.5" width="1" height="24.5" fill="#2a2a2a"/>
<rect x="427.2" y="745.5" width="1" height="24.5" fill="#2a2a2a"/>
<circle cx="313.1" cy="758.05" r="8.7" fill="#140c0c"/>
<path d="M313.1,758.05 L313.1,750.3499999999999 A7.7,7.7 0 0 0 305.40000000000003,758.05 Z" fill="#e4e4e4"/>
<path d="M313.1,758.05 L320.8,758.05 A7.7,7.7 0 0 0 313.1,750.3499999999999 Z" fill="#7e7070"/>
<path d="M313.1,758.05 L305.40000000000003,758.05 A7.7,7.7 0 0 0 313.1,765.75 Z" fill="#6e5650"/>
<path d="M313.1,758.05 L313.1,765.75 A7.7,7.7 0 0 0 320.8,758.05 Z" fill="#d8a098"/>
<circle cx="313.1" cy="758.05" r="7.7" fill="url(#gsph)"/>
<path d="M327.5,756.35 L334.70000000000005,756.35 L331.1,749.35 Z" fill="#c4c4c4"/>
<path d="M327.5,759.35 L334.70000000000005,759.35 L331.1,766.35 Z" fill="#c4c4c4"/>
<text x="347.45" y="763.75" font-size="14.00" letter-spacing="-0.915" fill="#000" stroke="#000" stroke-width="0.18" >PBR-M</text>
<text x="407.47" y="763.75" font-size="14.00" letter-spacing="0.000" fill="#000" stroke="#000" stroke-width="0.18" >3</text>
<text x="435.20" y="763.75" font-size="14.00" letter-spacing="0.000" fill="#000" stroke="#000" stroke-width="0.18" >F</text>
<rect x="297.3" y="778.5" width="38.30000000000001" height="24.700000000000045" rx="4" fill="#ffcfa6" stroke="#191919" stroke-width="1"/>
<text x="356.79" y="797.30" font-size="14.00" letter-spacing="0.175" fill="#000" stroke="#000" stroke-width="0.18" >Color</text>
<circle cx="283.0" cy="791.2" r="6.2" fill="#cccc2a" stroke="#000" stroke-opacity="0.65" stroke-width="1.3"/>
<rect x="297.3" y="806.7" width="156.2" height="24.299999999999955" rx="12.149999999999977" fill="url(#gnum)" stroke="#191919" stroke-opacity="0.9" stroke-width="1"/>
<rect x="297.8" y="807.2" width="155.2" height="23.299999999999955" rx="11.649999999999977" fill="url(#gfill)" clip-path="url(#clip17)"/>
<text x="315.55" y="824.85" font-size="14.00" letter-spacing="0.089" fill="#000" stroke="#000" stroke-width="0.18" >Roughness:</text>
<text x="398.20" y="824.85" font-size="14.00" letter-spacing="0.366" fill="#000" stroke="#000" stroke-width="0.18" >0.027</text>
<circle cx="283.0" cy="818.7" r="6.2" fill="#b4b4b4" stroke="#000" stroke-opacity="0.65" stroke-width="1.3"/>
<rect x="297.3" y="833.6" width="156.2" height="24.799999999999955" rx="4" fill="url(#gmenu)" stroke="#000" stroke-opacity="0.9" stroke-width="1"/>
<text x="306.05" y="852.00" font-size="14.00" letter-spacing="0.348" fill="#fff"  >Normal</text>
<path d="M441.9,844.5 L449.5,844.5 L445.7,837.5 Z" fill="#c8c8c8"/>
<path d="M441.9,847.5 L449.5,847.5 L445.7,854.5 Z" fill="#c8c8c8"/>
<circle cx="283.0" cy="846.1" r="6.2" fill="#6868cc" stroke="#000" stroke-opacity="0.65" stroke-width="1.3"/>
<g mask="url(#nm18)">
<rect x="526.10" y="386.20" width="193.10" height="149.70" rx="13.80" fill="#000" fill-opacity="0.0078"/>
<rect x="526.50" y="386.60" width="192.30" height="148.90" rx="13.40" fill="#000" fill-opacity="0.0157"/>
<rect x="526.90" y="387.00" width="191.50" height="148.10" rx="13.00" fill="#000" fill-opacity="0.0235"/>
<rect x="527.30" y="387.40" width="190.70" height="147.30" rx="12.60" fill="#000" fill-opacity="0.0314"/>
<rect x="527.70" y="387.80" width="189.90" height="146.50" rx="12.20" fill="#000" fill-opacity="0.0392"/>
<rect x="528.10" y="388.20" width="189.10" height="145.70" rx="11.80" fill="#000" fill-opacity="0.0471"/>
<rect x="528.50" y="388.60" width="188.30" height="144.90" rx="11.40" fill="#000" fill-opacity="0.0549"/>
<rect x="528.90" y="389.00" width="187.50" height="144.10" rx="11.00" fill="#000" fill-opacity="0.0627"/>
<rect x="529.30" y="389.40" width="186.70" height="143.30" rx="10.60" fill="#000" fill-opacity="0.0706"/>
<rect x="529.70" y="389.80" width="185.90" height="142.50" rx="10.20" fill="#000" fill-opacity="0.0784"/>
<rect x="530.10" y="390.20" width="185.10" height="141.70" rx="9.80" fill="#000" fill-opacity="0.0863"/>
<rect x="530.50" y="390.60" width="184.30" height="140.90" rx="9.40" fill="#000" fill-opacity="0.0941"/>
</g>
<path d="M530.9,406.8 L714.4,406.8 L714.4,522.1 A9,9 0 0 1 705.4,531.1 L539.9,531.1 A9,9 0 0 1 530.9,522.1 L530.9,406.8 Z" fill="rgb(106,106,106)" fill-opacity="0.7"/>
<path d="M539.9,381.0 L705.4,381.0 A9,9 0 0 1 714.4,390.0 L714.4,406.8 L530.9,406.8 L530.9,390.0 A9,9 0 0 1 539.9,381.0 Z" fill="url(#hg19)"/>
<rect x="530.9" y="381.0" width="183.5" height="150.10000000000002" rx="9" fill="none" stroke="#000" stroke-opacity="0.35" stroke-width="1"/>
<path d="M538.6999999999999,390.59999999999997 L550.6,390.59999999999997 L544.65,401.5 Z" fill="#454348"/>
<text x="561.55" y="401.80" font-size="14.00" letter-spacing="0.223" fill="#000" stroke="#000" stroke-width="0.18" >Mix Shader</text>
<text x="643.17" y="434.40" font-size="14.00" letter-spacing="0.184" fill="#000" stroke="#000" stroke-width="0.18" >Shader</text>
<circle cx="714.4" cy="427.5" r="6.2" fill="#66cc66" stroke="#000" stroke-opacity="0.65" stroke-width="1.3"/>
<text x="555.65" y="460.20" font-size="14.00" letter-spacing="-0.656" fill="#000" stroke="#000" stroke-width="0.18" >Fac</text>
<circle cx="531.3" cy="454.1" r="6.2" fill="#b4b4b4" stroke="#000" stroke-opacity="0.65" stroke-width="1.3"/>
<text x="556.16" y="488.90" font-size="14.00" letter-spacing="0.184" fill="#000" stroke="#000" stroke-width="0.18" >Shader</text>
<circle cx="531.3" cy="482.8" r="6.2" fill="#66cc66" stroke="#000" stroke-opacity="0.65" stroke-width="1.3"/>
<text x="556.16" y="517.30" font-size="14.00" letter-spacing="0.184" fill="#000" stroke="#000" stroke-width="0.18" >Shader</text>
<circle cx="531.3" cy="511.2" r="6.2" fill="#66cc66" stroke="#000" stroke-opacity="0.65" stroke-width="1.3"/>
<g mask="url(#nm20)">
<rect x="813.50" y="316.20" width="193.10" height="116.50" rx="13.80" fill="#000" fill-opacity="0.0078"/>
<rect x="813.90" y="316.60" width="192.30" height="115.70" rx="13.40" fill="#000" fill-opacity="0.0157"/>
<rect x="814.30" y="317.00" width="191.50" height="114.90" rx="13.00" fill="#000" fill-opacity="0.0235"/>
<rect x="814.70" y="317.40" width="190.70" height="114.10" rx="12.60" fill="#000" fill-opacity="0.0314"/>
<rect x="815.10" y="317.80" width="189.90" height="113.30" rx="12.20" fill="#000" fill-opacity="0.0392"/>
<rect x="815.50" y="318.20" width="189.10" height="112.50" rx="11.80" fill="#000" fill-opacity="0.0471"/>
<rect x="815.90" y="318.60" width="188.30" height="111.70" rx="11.40" fill="#000" fill-opacity="0.0549"/>
<rect x="816.30" y="319.00" width="187.50" height="110.90" rx="11.00" fill="#000" fill-opacity="0.0627"/>
<rect x="816.70" y="319.40" width="186.70" height="110.10" rx="10.60" fill="#000" fill-opacity="0.0706"/>
<rect x="817.10" y="319.80" width="185.90" height="109.30" rx="10.20" fill="#000" fill-opacity="0.0784"/>
<rect x="817.50" y="320.20" width="185.10" height="108.50" rx="9.80" fill="#000" fill-opacity="0.0863"/>
<rect x="817.90" y="320.60" width="184.30" height="107.70" rx="9.40" fill="#000" fill-opacity="0.0941"/>
</g>
<path d="M818.3,335.8 L1001.8,335.8 L1001.8,418.9 A9,9 0 0 1 992.8,427.9 L827.3,427.9 A9,9 0 0 1 818.3,418.9 L818.3,335.8 Z" fill="rgb(106,106,106)" fill-opacity="0.7"/>
<path d="M827.3,311.0 L992.8,311.0 A9,9 0 0 1 1001.8,320.0 L1001.8,335.8 L818.3,335.8 L818.3,320.0 A9,9 0 0 1 827.3,311.0 Z" fill="url(#hg21)"/>
<rect x="818.3" y="311.0" width="183.5" height="116.89999999999998" rx="9" fill="none" stroke="#000" stroke-opacity="0.35" stroke-width="1"/>
<path d="M826.0999999999999,320.09999999999997 L838.0,320.09999999999997 L832.05,331.0 Z" fill="#454348"/>
<text x="848.55" y="330.80" font-size="14.00" letter-spacing="0.433" fill="#000" stroke="#000" stroke-width="0.18" >Material Output</text>
<text x="842.16" y="356.80" font-size="14.00" letter-spacing="0.164" fill="#000" stroke="#000" stroke-width="0.18" >Surface</text>
<circle cx="818.3" cy="350.7" r="6.2" fill="#66cc66" stroke="#000" stroke-opacity="0.65" stroke-width="1.3"/>
<text x="842.74" y="385.70" font-size="14.00" letter-spacing="0.356" fill="#000" stroke="#000" stroke-width="0.18" >Volume</text>
<circle cx="818.3" cy="379.6" r="6.2" fill="#66cc66" stroke="#000" stroke-opacity="0.65" stroke-width="1.3"/>
<text x="841.65" y="414.50" font-size="14.00" letter-spacing="0.384" fill="#000" stroke="#000" stroke-width="0.18" >Displacement</text>
<circle cx="818.3" cy="408.4" r="6.2" fill="#b4b4b4" stroke="#000" stroke-opacity="0.65" stroke-width="1.3"/>
<rect x="0" y="0" width="1006" height="21" fill="#696969"/>
<rect x="0" y="21" width="1006" height="1" fill="#0a0a0a"/>
<rect x="0" y="22" width="1006" height="1" fill="#4a4a4a"/>
<path d="M-6,-1 L4.5,-1 Q8.7,-1 8.7,3.5 L8.7,14 Q8.7,18.3 4.5,18.3 L-6,18.3 Z" fill="#3c3c3c" stroke="#1e1e1e" stroke-width="1"/>
<path d="M0.3,7.5 L5.2,7.5 L2.75,2.4 Z M0.3,9.8 L5.2,9.8 L2.75,15 Z" fill="#d0d0d0"/>
<g transform="translate(36.8,9.7)"><path d="M-8.6,2.6 L-2,-2.2" stroke="#5a2a00" stroke-width="3.4" stroke-linecap="round"/><path d="M-4,-6.8 L1.5,-3.5" stroke="#5a2a00" stroke-width="3.2" stroke-linecap="round"/><circle cx="0" cy="0" r="6.4" fill="#5a2a00"/><path d="M-8.6,2.6 L-2,-2.2" stroke="#ea8a2a" stroke-width="2" stroke-linecap="round"/><path d="M-4,-6.8 L1.5,-3.5" stroke="#ea8a2a" stroke-width="1.8" stroke-linecap="round"/><circle cx="0" cy="0" r="5.5" fill="#ea8a2a"/><circle cx="0" cy="0" r="3.7" fill="#fff"/><circle cx="0" cy="0" r="2.1" fill="#2a5a8a"/></g>
<text x="53.36" y="13.80" font-size="10.77" letter-spacing="0.334" fill="#000" stroke="#000" stroke-width="0.18" >v2.79 | Verts:13,755 | Faces:13,395 | Tris:27,198 | Objects:1/7 | Lamps:0/0 | Mem:20.95M | Cube.003</text>
<rect x="0" y="952.4" width="1006" height="11.6" fill="url(#gband)"/>
<rect x="0" y="964" width="1006" height="1.3" fill="#262626"/>
<rect x="0" y="965.3" width="1006" height="1" fill="#565656"/>
<rect x="0" y="966.3" width="1006" height="2.7" fill="#363636"/>
<rect x="0" y="969" width="1006" height="1" fill="#9a9a9a"/>
<rect x="0" y="970" width="1006" height="24" fill="#727272"/>
<rect x="-10" y="973.3" width="29.4" height="19.2" fill="url(#gtxt)" stroke="#222" stroke-width="1"/>
<rect x="19.4" y="973.3" width="19.9" height="19.2" fill="url(#gfbtn)" stroke="#222" stroke-width="1"/>
<rect x="39.3" y="973.3" width="20.3" height="19.2" fill="url(#gfbtn)" stroke="#222" stroke-width="1"/>
<path d="M59.6,973.3 L75.5,973.3 A4,4 0 0 1 79.5,977.3 L79.5,988.5 A4,4 0 0 1 75.5,992.5 L59.6,992.5 L59.6,973.3 Z" fill="url(#gfbtn)" stroke="#222" stroke-width="1"/>
<text x="25.92" y="988.20" font-size="10.77" letter-spacing="0.000" fill="#000" stroke="#000" stroke-width="0.18" >F</text>
<path d="M49,978 L49,988 M44,983 L54,983" stroke="#1a1a1a" stroke-width="4.6"/>
<path d="M49,978 L49,988 M44,983 L54,983" stroke="#fff" stroke-width="2.4"/>
<path d="M65,978.5 L73.5,987.5 M73.5,978.5 L65,987.5" stroke="#1a1a1a" stroke-width="4.4"/>
<path d="M65,978.5 L73.5,987.5 M73.5,978.5 L65,987.5" stroke="#fff" stroke-width="2.2"/>
<rect x="88.5" y="976" width="13.6" height="13.6" rx="3" fill="#444" stroke="#262626" stroke-width="1"/>
<path d="M91.3,982.3 L94.6,986.2 L100.8,977.2" fill="none" stroke="#dcdcdc" stroke-width="2"/>
<text x="109.77" y="988.30" font-size="10.77" letter-spacing="0.068" fill="#f0f0f0"  >Use Nodes</text>
<rect x="177.7" y="973.4" width="18.6" height="18.6" rx="4" fill="url(#gfbtn)" stroke="#2a2a2a" stroke-width="1"/>
<g transform="translate(187.5,982.3) rotate(45)"><path d="M0,3 L0,10" stroke="#1a1a1a" stroke-width="2.8" stroke-linecap="round"/><path d="M0,3 L0,9.5" stroke="#e8e8e8" stroke-width="1.2" stroke-linecap="round"/><path d="M-2.2,-8 L2.2,-8 L2.2,-4.5 L3.6,-3.2 L3.6,-2.2 L1.5,-2.2 L4.8,3.2 L-4.8,3.2 L-1.5,-2.2 L-3.6,-2.2 L-3.6,-3.2 L-2.2,-4.5 Z" fill="#e4e4e4" stroke="#1a1a1a" stroke-width="1.1" stroke-linejoin="round"/><path d="M-1,-7 L-1,-4" stroke="#fff" stroke-width="1"/></g>
<rect x="203" y="973.4" width="18.3" height="18.6" rx="4" fill="#7c7c7c" stroke="#5e5e5e" stroke-width="1"/>
<path d="M211.5,987 L211.5,980.5 L208,980.5 L212,976.2 L216,980.5 L213,980.5 L213,987 L217.5,987" fill="none" stroke="#9c9c9c" stroke-width="1.7" stroke-linejoin="round"/>
<rect x="238.4" y="973.1" width="19.1" height="18.9" rx="4" fill="url(#gfdark)" stroke="#2a2a2a" stroke-width="1"/>
<path d="M241.5,979.5 L247.8,986.3 L254.5,979.5" fill="none" stroke="#2a3050" stroke-width="2.6"/>
<path d="M241.5,979.5 L247.8,986.3 L254.5,979.5" fill="none" stroke="#7a86b8" stroke-width="1.2"/>
<rect x="244" y="975.8" width="8" height="5.6" fill="#f4f4f0" stroke="#181818" stroke-width="1"/>
<circle cx="243.2" cy="979.4" r="0.9" fill="#d8c870"/><circle cx="252.7" cy="979.4" r="0.9" fill="#d8c870"/>
<rect x="241.3" y="986.4" width="5" height="3.8" fill="#f4f4f0" stroke="#181818" stroke-width="0.8"/>
<rect x="250.4" y="986.4" width="5" height="3.8" fill="#f4f4f0" stroke="#181818" stroke-width="0.8"/>
<path d="M267.5,973.1 L282.4,973.1 L282.4,992 L267.5,992 A4,4 0 0 1 263.5,988 L263.5,977.1 A4,4 0 0 1 267.5,973.1 Z" fill="url(#gfbtn)" stroke="#2a2a2a" stroke-width="1"/>
<g transform="translate(273,982.5) rotate(45)"><path d="M-3.5,6 L-3.5,-1 A3.5,3.5 0 0 1 3.5,-1 L3.5,6" fill="none" stroke="#5e5e5e" stroke-width="3.6"/><path d="M-3.5,6 L-3.5,-1 A3.5,3.5 0 0 1 3.5,-1 L3.5,6" fill="none" stroke="#b4b4b4" stroke-width="2"/></g>
<path d="M282.4,973.1 L310.5,973.1 A4,4 0 0 1 314.5,977.1 L314.5,988 A4,4 0 0 1 310.5,992 L282.4,992 L282.4,973.1 Z" fill="url(#gfdark)" stroke="#2a2a2a" stroke-width="1"/>
<path d="M289,986.3 L302.2,986.3 M296,980.7 L302.2,980.7 M293.3,983 L293.3,990.2 M299.6,976.4 L299.6,990.2" stroke="#e8e0e0" stroke-width="1.1"/>
<circle cx="292.5" cy="979.4" r="3.9" fill="#a8d0f4" stroke="#1e3c78" stroke-width="1"/>
<circle cx="292.5" cy="979.4" r="1.2" fill="#3a6ab0"/>
<path d="M305.8,981.5 L311.5,981.5 L308.65,976.8 Z M305.8,984 L311.5,984 L308.65,988.7 Z" fill="#9a9a9a"/>
<path d="M324.4,973.1 L355.2,973.1 A4,4 0 0 1 359.2,977.1 L359.2,988 A4,4 0 0 1 355.2,992 L324.4,992 A4,4 0 0 1 320.4,988 L320.4,977.1 A4,4 0 0 1 324.4,973.1 Z" fill="url(#gfbtn)" stroke="#2a2a2a" stroke-width="1"/>
<rect x="339.2" y="973.1" width="0.9" height="18.9" fill="#1e1e1e"/>
<rect x="327.7" y="976.6" width="9.8" height="10" rx="1" fill="#8c8470" stroke="#1a1a1a" stroke-width="1.1"/>
<rect x="330.4" y="975.3" width="4.4" height="3" fill="#f0ece0" stroke="#1a1a1a" stroke-width="0.8"/>
<rect x="341.3" y="976.6" width="9.8" height="10" rx="1" fill="#8c8470" stroke="#1a1a1a" stroke-width="1.1"/>
<rect x="344.0" y="975.3" width="4.4" height="3" fill="#f0ece0" stroke="#1a1a1a" stroke-width="0.8"/>
<path d="M323.2,989.4 L329.7,983.2 M325.2,983.2 L329.7,983.2 L329.7,987.7" fill="none" stroke="#1a1a1a" stroke-width="3.2"/>
<path d="M323.2,989.4 L329.7,983.2 M325.2,983.2 L329.7,983.2 L329.7,987.7" fill="none" stroke="#fff" stroke-width="1.6"/>
<path d="M349.8,983.6 L355.8,989.4 M355.8,984.9 L355.8,989.4 L351.3,989.4" fill="none" stroke="#1a1a1a" stroke-width="3.2"/>
<path d="M349.8,983.6 L355.8,989.4 M355.8,984.9 L355.8,989.4 L351.3,989.4" fill="none" stroke="#fff" stroke-width="1.6"/></svg></body></html>
